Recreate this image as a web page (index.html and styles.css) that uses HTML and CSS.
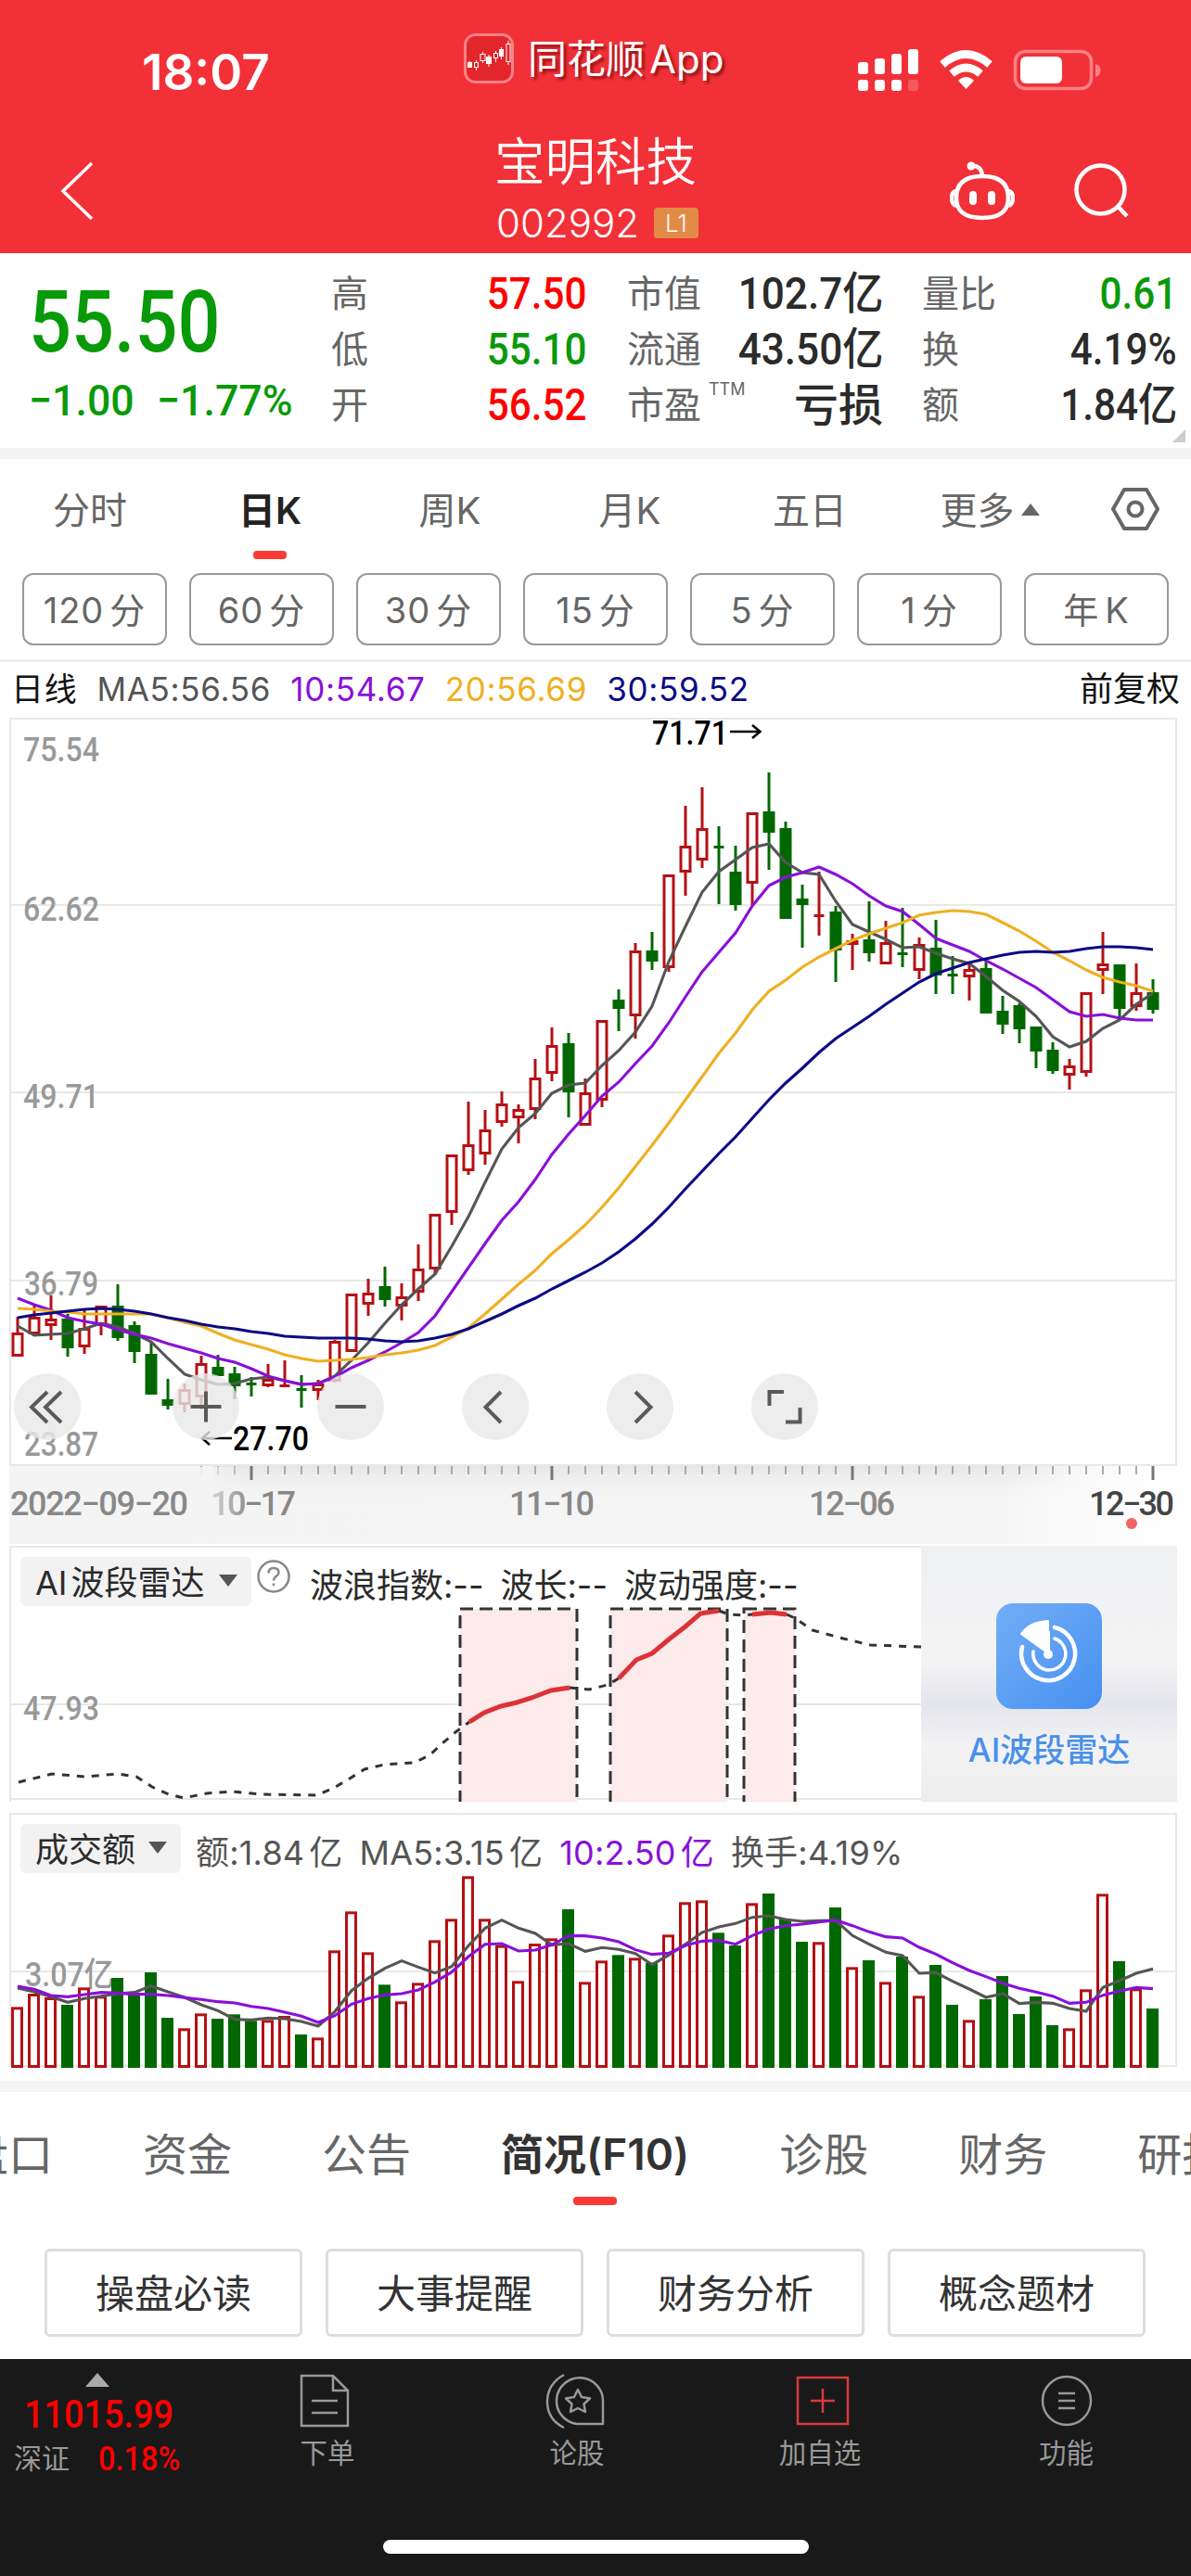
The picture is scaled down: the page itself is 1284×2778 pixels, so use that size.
FILE: index.html
```html
<!DOCTYPE html>
<html lang="zh-CN">
<head>
  <meta charset="UTF-8">
  <meta name="viewport" content="width=device-width, initial-scale=1.0">
  <title>宝明科技 002992</title>
  <link rel="stylesheet" href="styles.css">
</head>
<body>

  <!-- Header -->
  <header class="header">
    <div class="status">
      <div class="time">18:07</div>
      <div class="app">
        <svg width="54" height="54" viewBox="0 0 54 54">
          <rect x="1.5" y="1.5" width="51" height="51" rx="11" fill="#e3262b" stroke="#f98286" stroke-width="3"/>
          <g fill="#fff"><rect x="4" y="31" width="5" height="6"/><rect x="24" y="25" width="6" height="8"/><rect x="38" y="17" width="5" height="8"/></g>
          <g fill="none" stroke="#fff"><path d="M6.500 30V37M13.500 29V40M20.500 20V32M27 23V36M34.500 19V31M40.500 15V28M48 8V34"/><g fill="#e3262b"><rect x="11.500" y="31.500" width="4" height="5"/><rect x="18" y="22.500" width="5" height="7"/><rect x="32.500" y="21.500" width="4" height="5"/><rect x="46" y="11.500" width="4" height="19"/></g></g>
        </svg>
        <span>同花顺<span class="app-latin">App</span></span>
      </div>
      <svg class="signals" width="264" height="46" viewBox="0 0 264 46">
        <g fill="#fff">
          <rect x="0" y="14" width="11" height="13" rx="3"/><rect x="18" y="10" width="11" height="17" rx="3"/>
          <rect x="36" y="5" width="11" height="22" rx="3"/><rect x="54" y="0" width="11" height="27" rx="3"/>
          <rect x="0" y="33" width="11" height="12" rx="3"/><rect x="18" y="33" width="11" height="12" rx="3"/>
          <rect x="36" y="33" width="11" height="12" rx="3"/><rect x="54" y="33" width="11" height="12" rx="3" opacity=".2"/>
          <rect x="175" y="8" width="45" height="29" rx="6"/>
        </g>
        <g fill="none" stroke="#fff" stroke-width="8.500">
          <path d="M91 16.500Q116.500-5.500 142 16.500"/><path d="M101 26.500Q116.500 13.500 132 26.500"/>
        </g>
        <path d="M108 34Q116.500 26 125 34L116.500 43Z" fill="#fff"/>
        <rect x="169.500" y="2.500" width="82" height="40" rx="11" fill="none" stroke="#fb8185" stroke-width="3.500"/>
        <path d="M256 16Q261.500 17.500 261.500 23T256 30Z" fill="#fb8185"/>
      </svg>
    </div>
    <div class="title-bar">
      <svg class="back" width="40" height="64" viewBox="0 0 40 64"><path d="M35 2L4 32L35 62" fill="none" stroke="#fff" stroke-width="3.500"/></svg>
      <div class="title">
        <h1>宝明科技</h1>
        <div class="code">002992 <span class="badge">L1</span></div>
      </div>
      <div class="title-icons">
        <svg width="70" height="64" viewBox="0 0 70 64" fill="none" stroke="#fff" stroke-width="4.500">
          <path d="M24 4.500C31 5 35 8 35 17"/><circle cx="23" cy="5" r="4.500" fill="#fff" stroke="none"/>
          <path d="M35 16C55 16 63 25 63 39C63 54 54 61 35 61S7 54 7 39C7 25 15 16 35 16Z"/>
          <path d="M7 32Q2 33 2 39.500T7 48M63 32Q68 33 68 39.500T63 48"/>
          <path d="M25 36V43M45 36V43" stroke-width="8" stroke-linecap="round"/>
        </svg>
        <svg width="60" height="60" viewBox="0 0 60 60" fill="none" stroke="#fff" stroke-width="4.500"><circle cx="28.500" cy="28.500" r="26"/><path d="M47.500 47L57 57"/></svg>
      </div>
    </div>
  </header>

  <!-- Quote -->
  <section class="quote">
    <div class="price green">
      <div class="last"><span class="num">55.50</span></div>
      <div class="change"><span class="num">−1.00</span><span class="num">−1.77%</span></div>
    </div>
    <dl class="stats stats-a">
      <dt>高</dt><dd class="red"><span class="num">57.50</span></dd>
      <dt>低</dt><dd class="green"><span class="num">55.10</span></dd>
      <dt>开</dt><dd class="red"><span class="num">56.52</span></dd>
    </dl>
    <dl class="stats stats-b">
      <dt>市值</dt><dd><span class="num">102.7亿</span></dd>
      <dt>流通</dt><dd><span class="num">43.50亿</span></dd>
      <dt>市盈<sup>TTM</sup></dt><dd><span>亏损</span></dd>
    </dl>
    <dl class="stats stats-c">
      <dt>量比</dt><dd class="green"><span class="num">0.61</span></dd>
      <dt>换</dt><dd><span class="num">4.19%</span></dd>
      <dt>额</dt><dd><span class="num">1.84亿</span></dd>
    </dl>
    <i class="corner"></i>
  </section>

  <!-- Periods -->
  <nav class="periods">
    <a>分时</a><a class="active">日K</a><a>周K</a><a>月K</a><a>五日</a><a>更多<i class="tri up"></i></a>
    <svg width="52" height="48" viewBox="0 0 52 48" fill="none" stroke="#666" stroke-width="4"><path d="M14 3H38L50 24L38 45H14L2 24Z" stroke-linejoin="round"/><circle cx="26" cy="24" r="7.500"/></svg>
  </nav>
  <div class="intervals">
    <button>120<b>分</b></button><button>60<b>分</b></button><button>30<b>分</b></button><button>15<b>分</b></button><button>5<b>分</b></button><button>1<b>分</b></button><button>年<b>K</b></button>
  </div>

  <!-- K line chart -->
  <div class="legend">
    <span class="black">日线</span><span class="ma5">MA5:56.56</span><span class="ma10">10:54.67</span><span class="ma20">20:56.69</span><span class="ma30">30:59.52</span><span class="adjust">前复权</span>
  </div>
  <div class="kline">
    <svg id="kline" width="1284" height="893" viewBox="0 774 1284 893">
      <defs>
        <linearGradient id="axisBg" x1="0" x2="1" y1="0" y2="0"><stop offset="0" stop-color="#f4f4f4"/><stop offset=".85" stop-color="#f5f5f5"/><stop offset="1" stop-color="#fff"/></linearGradient>
        <linearGradient id="axisShade" x1="0" x2="0" y1="0" y2="1"><stop offset="0" stop-color="#e6e6e6"/><stop offset=".45" stop-color="#f4f4f4" stop-opacity="0"/></linearGradient>
        <linearGradient id="axisFade"><stop offset="0" stop-color="#f4f4f4"/><stop offset="1" stop-color="#f4f4f4" stop-opacity="0"/></linearGradient>
        <linearGradient id="axisEnd"><stop offset="0" stop-color="#fafafa" stop-opacity="0"/><stop offset="1" stop-color="#fafafa"/></linearGradient>
      </defs>
      <path class="grid" d="M11 775H1268V1580H11ZM11 976H1268M11 1178H1268M11 1381H1268"/>
      <rect x="10" y="1581" width="1258" height="84" fill="url(#axisBg)"/>
      <rect x="230" y="1581" width="950" height="84" fill="url(#axisShade)"/>
      <rect x="1080" y="1581" width="100" height="84" fill="url(#axisEnd)"/>
      <g class="axis-label">
        <text x="25" y="821" textLength="82" lengthAdjust="spacingAndGlyphs">75.54</text>
        <text x="25" y="993" textLength="82" lengthAdjust="spacingAndGlyphs">62.62</text>
        <text x="25" y="1195" textLength="82" lengthAdjust="spacingAndGlyphs">49.71</text>
        <text x="26" y="1397" textLength="80" lengthAdjust="spacingAndGlyphs">36.79</text>
        <text x="26" y="1570" textLength="80" lengthAdjust="spacingAndGlyphs">23.87</text>
      </g>
      <g class="dates">
        <text x="11" y="1634" textLength="192">2022−09−20</text>
        <text x="227" y="1634" textLength="92">10−17</text>
        <text x="549" y="1634" textLength="92">11−10</text>
        <text x="872" y="1634" textLength="93">12−06</text>
        <text class="today" x="1174" y="1634" textLength="92">12−30</text>
      </g>
      <g id="ticks"></g>
      <rect x="210" y="1582" width="60" height="60" fill="url(#axisFade)"/>
      <g id="candles"></g>
      <g id="averages"></g>
      <g class="mark">
        <text x="703" y="803" textLength="82" lengthAdjust="spacingAndGlyphs">71.71</text>
        <path d="M787 789H819M811 782L819.500 789L811 796M250 1551H219M226 1544L218 1551L226 1558"/>
        <text x="251" y="1564" textLength="82" lengthAdjust="spacingAndGlyphs">27.70</text>
      </g>
      <circle cx="1220" cy="1643" r="6" fill="#f26364"/>
    </svg>
    <div class="controls">
      <button><svg viewBox="0 0 72 72"><path d="M36 20L19 36.500L36 53M51 20L34 36.500L51 53"/></svg></button>
      <button><svg viewBox="0 0 72 72"><path d="M19.500 36H52.500M36 19.500V52.500"/></svg></button>
      <button><svg viewBox="0 0 72 72"><path d="M19.500 36H52.500"/></svg></button>
      <button><svg viewBox="0 0 72 72"><path d="M42 20L25.500 36.500L42 53"/></svg></button>
      <button><svg viewBox="0 0 72 72"><path d="M31 20L47.500 36.500L31 53"/></svg></button>
      <button><svg viewBox="0 0 72 72"><path d="M19.500 35V20H35M37 52.500H52.500V37"/></svg></button>
    </div>
  </div>

  <!-- AI radar -->
  <section class="radar">
    <div class="panel-head">
      <span class="chip"><span>AI<b>波段雷达</b></span><i class="tri down"></i></span>
      <svg class="help" width="38" height="38" viewBox="0 0 38 38"><circle cx="19" cy="19" r="16.500" fill="none" stroke="#888" stroke-width="2.500"/><path d="M13.500 15.500Q13.500 10 19 10T24.500 15C24.500 19 19 18.500 19 23.500M19 26.500V29" fill="none" stroke="#888" stroke-width="2.500"/></svg>
      <span class="radar-values"><span>波浪指数:--</span><span>波长:--</span><span>波动强度:--</span></span>
    </div>
    <svg class="plot" width="1284" height="276" viewBox="0 1667 1284 276">
      <path class="grid" d="M11 1943V1668H1268M11 1838H993M11 1940H993"/>
      <g class="zone">
        <rect x="496" y="1735" width="126" height="210"/><rect x="658" y="1735" width="126" height="210"/><rect x="802" y="1735" width="55" height="210"/>
      </g>
      <g class="wave">
        <path d="M20 1922L56 1913L92 1916L127 1913L147 1916L164 1927L182 1935L198 1939L223 1934L250 1932L282 1935L342 1936L360 1928L377 1918L393 1908L414 1903L446 1901L463 1893L477 1880L491 1868L506 1857"/>
        <path d="M614 1820L635 1822L655 1817L667 1810M775 1737L786 1741L802 1742L811 1741M848 1741L857 1745L876 1758L909 1767L938 1774L993 1776"/>
        <path class="rise" d="M506 1857L522 1847L540 1840L557 1836L573 1831L594 1823L614 1820M667 1810L686 1790L703 1783L721 1768L739 1754L755 1740L775 1737M811 1741L831 1739L848 1741"/>
      </g>
      <g class="axis-label"><text x="25" y="1855" textLength="82" lengthAdjust="spacingAndGlyphs">47.93</text></g>
    </svg>
    <div class="promo">
      <svg width="114" height="114" viewBox="0 0 114 114">
        <defs><linearGradient id="blue" x1="0" y1="0" x2="1" y2="1"><stop offset="0" stop-color="#73aef7"/><stop offset="1" stop-color="#4690f0"/></linearGradient></defs>
        <rect width="114" height="114" rx="18" fill="url(#blue)"/>
        <g fill="none" stroke="#fff" stroke-width="4.500" stroke-linecap="round"><path d="M63 26A29 29 0 1 1 28 47"/><path d="M63 38A17.500 17.500 0 1 1 40 52" stroke-width="3.500"/></g>
        <path d="M56 54L27 33Q36 20 56 19Z" fill="#fff" stroke="#fff" stroke-width="2" stroke-linejoin="round"/><path d="M56 30V56" stroke="#fff" stroke-width="4"/><circle cx="56" cy="55" r="5" fill="#fff"/>
      </svg>
      <span>AI波段雷达</span>
    </div>
  </section>

  <!-- Turnover -->
  <section class="volume">
    <div class="panel-head">
      <span class="chip">成交额<i class="tri down"></i></span>
      <span class="volume-values"><span>额:1.84<b>亿</b></span><span>MA5:3.15<b>亿</b></span><span class="ma10">10:2.50<b>亿</b></span><span>换手:4.19%</span></span>
    </div>
    <svg class="plot" width="1284" height="289" viewBox="0 1955 1284 289">
      <path class="grid" d="M11 2229V1956H1268V2228H11M11 2126H1268"/>
      <g class="axis-label"><text x="27" y="2142" textLength="96" lengthAdjust="spacingAndGlyphs">3.07亿</text></g>
      <g id="bars"></g>
    </svg>
  </section>

  <!-- Detail tabs -->
  <nav class="tabs">
    <a>盘口</a><a>资金</a><a>公告</a><a class="active">简况(F10)</a><a>诊股</a><a>财务</a><a>研报</a>
  </nav>
  <div class="shortcuts">
    <button>操盘必读</button><button>大事提醒</button><button>财务分析</button><button>概念题材</button>
  </div>

  <!-- Bottom bar -->
  <footer class="footer">
    <div class="index">
      <i class="tri up"></i>
      <div class="index-value"><span class="num">11015.99</span></div>
      <div class="index-row"><span>深证</span><span class="num">0.18%</span></div>
    </div>
    <a class="order"><svg width="60" height="60" viewBox="0 0 60 60"><path d="M5 3H39L55 19V57H5ZM39 3V19H55M16 30H44M16 43H44"/></svg>下单</a>
    <a class="discuss"><svg width="66" height="60" viewBox="0 0 66 60"><path d="M22 2Q4 12 4 31T22 59M64 55H36A25 25 0 1 1 64 31ZM37 18L41 26L50 27.500L43.500 33.500L45 42L37 38L29 42L30.500 33.500L24 27.500L33 26Z" stroke-linejoin="round"/></svg>论股</a>
    <a class="favorite"><svg width="60" height="60" viewBox="0 0 60 60"><path d="M3 5H57V55H3ZM17 30H43M30 17V43"/></svg>加自选</a>
    <a class="more"><svg width="60" height="60" viewBox="0 0 60 60"><circle cx="30" cy="30" r="26"/><path d="M21 22H39M21 30H39M21 38H39"/></svg>功能</a>
    <div class="home"></div>
  </footer>

  <script src="script.js"></script>
</body>
</html>
```

FILE: styles.css
```css
body {
  margin: 0;
  width: 1284px;
  height: 2778px;
  overflow: hidden;
  background: #fff;
  font-family: Inter, "Noto Sans CJK SC", sans-serif;
  color: #666;
}

svg {
  display: block;
  flex: none;
}

button {
  font-family: inherit;
  background: none;
  padding: 0;
}

b {
  font-weight: inherit;
}

/* Narrow digits */
.num {
  display: inline-block;
  font-family: Roboto, "Noto Sans CJK SC", sans-serif;
  font-weight: 500;
  transform: scaleX(0.88);
  transform-origin: right;
}

.red { color: #f00; }
.green { color: #099a09; }
.black { color: #111; }
.ma10 { color: #8a0fd9; }
.ma20 { color: #eeb022; }
.ma30 { color: #0b0b85; }

.tri {
  display: inline-block;
  border: 10px solid transparent;
}
.tri.up {
  border-top: 0;
  border-bottom: 13px solid #666;
}
.tri.down {
  border-bottom: 0;
  border-top: 13px solid #555;
}

/* Header */
.header {
  height: 273px;
  background: #f23037;
  color: #fff;
}

.status {
  display: grid;
  grid-template-columns: 500px 425px 1fr;
  align-items: start;
  height: 140px;
}
.time {
  padding-left: 153px;
  margin-top: 47px;
  font-size: 53px;
  line-height: 62px;
  font-weight: 600;
}
.app {
  display: flex;
  gap: 15px;
  margin-top: 36px;
  font-size: 42px;
  line-height: 56px;
  white-space: nowrap;
  text-shadow: 3px 3px 3px rgba(90, 0, 0, 0.6);
}
.app-latin {
  margin-left: 5px;
}
.signals {
  margin-top: 53px;
}

.title-bar {
  display: grid;
  grid-template-columns: 400px 1fr 400px;
  height: 133px;
}
.back {
  margin: 34px 0 0 64px;
}
.title {
  text-align: center;
}
.title h1 {
  margin: 4px 0 0;
  font-size: 54.5px;
  line-height: 60px;
  font-weight: 350;
}
.code {
  display: flex;
  justify-content: center;
  align-items: center;
  gap: 16px;
  height: 60px;
  margin-top: 6px;
  padding-left: 4px;
  font-size: 42px;
  font-weight: 350;
}
.badge {
  width: 48px;
  height: 33px;
  border-radius: 4px;
  background: #e28b47;
  font-size: 26px;
  line-height: 33px;
}
.title-icons {
  display: flex;
  align-items: center;
  gap: 64px;
  padding: 33px 0 0 140px;
  height: 66px;
}

/* Quote */
.quote {
  position: relative;
  display: grid;
  grid-template-columns: 357px 275px 44px 276px 42px 275px;
  height: 210px;
  border-bottom: 12px solid #f4f4f4;
}
.price {
  padding-left: 31px;
}
.last {
  margin-top: 19px;
  font-size: 92px;
  line-height: 108px;
}
.last .num {
  transform-origin: left;
}
.change {
  display: flex;
  font-size: 47px;
  line-height: 60px;
}
.change .num {
  transform: scaleX(0.95);
  transform-origin: left;
}
.change .num + .num {
  margin-left: 18px;
}
.stats {
  display: grid;
  grid-template-columns: 80px 1fr;
  grid-auto-rows: 60px;
  margin: 14px 0 0;
  line-height: 60px;
  white-space: nowrap;
}
.stats-b { grid-column: 4; }
.stats-c { grid-column: 6; }
.stats-b .num { transform: scaleX(0.92); }
.stats dt {
  font-size: 40px;
}
.stats dd {
  display: flex;
  justify-content: flex-end;
  margin: 0;
  font-size: 48px;
  color: #2b2b2b;
  font-weight: 500;
}
.stats dd.red { color: #f00; }
.stats dd.green { color: #099a09; }
.stats sup {
  margin-left: 8px;
  font-size: 18px;
  line-height: 0;
  vertical-align: 25px;
}
.corner {
  position: absolute;
  right: 6px;
  bottom: 6px;
  border-left: 14px solid transparent;
  border-bottom: 14px solid #ccc;
}

/* Periods */
.periods {
  display: grid;
  grid-template-columns: repeat(6, 194px) 120px;
  justify-items: center;
  align-items: center;
  height: 106px;
  margin-bottom: 17px;
  font-size: 40px;
}
.periods svg {
  margin-top: 2px;
}
.periods a.active {
  font-weight: 600;
  color: #222;
}
.periods a.active::after,
.tabs a.active::after {
  content: "";
  display: block;
  width: 36px;
  height: 9px;
  margin: 17px auto -26px;
  border-radius: 4px;
  background: #fa3a35;
}
.periods .tri {
  margin: 0 0 9px 7px;
}

.intervals {
  display: grid;
  grid-template-columns: repeat(7, 156px);
  gap: 24px;
  height: 78px;
  padding: 0 24px 15px;
  border-bottom: 3px solid #eee;
}
.intervals button {
  padding-bottom: 4px;
  border: 2px solid #999;
  border-radius: 12px;
  color: #666;
  font-size: 38px;
  letter-spacing: 1px;
}
.intervals b {
  margin-left: 6px;
}

/* K line */
.legend {
  display: flex;
  gap: 21px;
  height: 60px;
  padding: 0 12px;
  font-size: 35px;
  line-height: 58px;
  letter-spacing: 0.7px;
  color: #555;
}
.adjust {
  margin-left: auto;
  font-size: 36px;
  letter-spacing: 0;
  color: #111;
}
.kline {
  position: relative;
}
.controls {
  position: absolute;
  left: 15px;
  top: 707px;
  display: flex;
  gap: 84px;
}
.controls button {
  width: 72px;
  height: 72px;
  border: 0;
  border-radius: 50%;
  background: rgba(233, 233, 233, 0.8);
}
.controls button:first-child {
  margin-right: 15px;
}
.controls path {
  fill: none;
  stroke: #5a5a5a;
  stroke-width: 4;
}

.grid {
  fill: none;
  stroke: #e8e8e8;
  stroke-width: 2;
}
.axis-label,
.dates,
.mark {
  font-family: Roboto, "Noto Sans CJK SC", sans-serif;
  font-size: 36px;
  font-weight: 500;
  fill: #999;
}
.dates {
  fill: #888;
}
.dates .today {
  fill: #444;
}
.mark {
  fill: #000;
}
.mark path {
  fill: none;
  stroke: #000;
  stroke-width: 2.5;
}

/* Sub charts */
.radar,
.volume {
  position: relative;
}
.radar {
  height: 276px;
  margin-bottom: 12px;
  overflow: hidden;
}
.volume {
  height: 289px;
  border-bottom: 12px solid #f4f4f4;
}
.panel-head {
  position: absolute;
  z-index: 1;
  top: 12px;
  left: 22px;
  display: flex;
  white-space: nowrap;
}
.chip {
  display: flex;
  align-items: center;
  justify-content: space-between;
  box-sizing: border-box;
  width: 249px;
  height: 53px;
  padding: 0 15px 3px 16px;
  border-radius: 6px;
  background: #f2f2f2;
  color: #2b2b2b;
  font-size: 36px;
}
.chip b {
  margin-left: 4px;
}
.volume .chip {
  width: 173px;
}
.help {
  margin: 2px 0 0 5px;
}
.radar-values,
.volume-values {
  display: flex;
  gap: 18px;
  margin: 5px 0 0 20px;
  font-size: 36px;
  line-height: 52px;
  color: #2b2b2b;
}
.volume-values {
  margin: 5px 0 0 16px;
  letter-spacing: 0.2px;
  color: #555;
}
.volume-values .ma10 {
  color: #8a0fd9;
}
.volume-values b {
  margin-left: 5px;
}
.zone {
  fill: #fdeaea;
  stroke: #333;
  stroke-width: 3;
  stroke-dasharray: 14 7;
}
.wave path {
  fill: none;
  stroke: #333;
  stroke-width: 3;
  stroke-dasharray: 8 8;
}
.wave .rise {
  stroke: #dc3237;
  stroke-width: 5;
  stroke-dasharray: none;
}
.promo {
  position: absolute;
  top: 0;
  right: 15px;
  display: flex;
  flex-direction: column;
  align-items: center;
  width: 276px;
  height: 276px;
  padding-top: 62px;
  box-sizing: border-box;
  background: linear-gradient(#eff0f2, #f4f4f5 45%, #e4e5ec 62%, #f3f3f4 78%, #ededee);
  color: #4a90ea;
  font-size: 35px;
  font-weight: 500;
  line-height: 44px;
}
.promo svg {
  margin-bottom: 22px;
}

/* Detail tabs */
.tabs {
  display: flex;
  gap: 97px;
  height: 128px;
  margin: 0 0 6px -39px;
  width: 1323px;
  overflow: hidden;
  align-items: center;
  font-size: 48px;
  white-space: nowrap;
}
.tabs a {
  flex: none;
}
.tabs a.active {
  color: #333;
  font-size: 46px;
  font-weight: 600;
}
.tabs a.active::after {
  width: 47px;
  margin: 16px auto -25px;
}
.shortcuts {
  display: grid;
  grid-template-columns: repeat(4, 278px);
  gap: 25px;
  height: 95px;
  padding: 35px 48px 24px;
}
.shortcuts button {
  padding-bottom: 4px;
  border: 3px solid #ddd;
  border-radius: 6px;
  color: #333;
  font-size: 42px;
}

/* Bottom bar */
.footer {
  position: relative;
  display: grid;
  grid-template-columns: 218px 270px 268px 256px 275px;
  height: 234px;
  background: #191919;
  color: #999;
}
.footer a {
  display: flex;
  flex-direction: column;
  align-items: center;
  padding-top: 15px;
  font-size: 29.5px;
  line-height: 53px;
}
.footer a svg {
  fill: none;
  stroke: #999;
  stroke-width: 2.5;
}
.footer .order svg,
.footer .discuss svg {
  margin-left: -6px;
}
.footer .favorite svg {
  margin-left: 6px;
  stroke: #d83a3e;
}
.index {
  width: 210px;
  text-align: center;
}
.index .tri {
  display: block;
  width: 0;
  margin: 15px auto 0;
  border-width: 0 13px 15px;
  border-bottom-color: #aaa;
}
.index .num {
  color: #f00;
  transform-origin: left;
}
.index-value {
  margin: 5px 0 0 26px;
  font-size: 43px;
  line-height: 46px;
  text-align: left;
}
.index-row {
  display: flex;
  margin-left: 15px;
  font-size: 30px;
  line-height: 51px;
}
.index-row .num {
  margin-left: 31px;
  font-size: 37px;
}
.home {
  position: absolute;
  left: 413px;
  bottom: 24px;
  width: 459px;
  height: 15px;
  border-radius: 8px;
  background: #fff;
}
```

FILE: script.js
```js
const RED = '#b51014';
const GREEN = '#016801';
const GRAY = '#555';
const PURPLE = '#8a0fd9';

// up/down, high, body top, body bottom, low
const candles = [
  ['r',1420,1437,1463,1463],['r',1408,1420,1439,1441],['r',1397,1422,1430,1445],['g',1417,1422,1454,1463],
  ['r',1413,1432,1453,1460],['r',1408,1408,1430,1440],['g',1385,1408,1443,1446],['g',1425,1429,1458,1470],
  ['g',1448,1460,1504,1504],['g',1487,1509,1516,1520],['r',1492,1498,1515,1523],['r',1462,1470,1507,1520],
  ['g',1461,1474,1484,1484],['g',1474,1481,1495,1509],['g',1485,1491,1494,1506],['r',1471,1487,1495,1496],
  ['r',1467,1493,1496,1496],['g',1483,1497,1500,1518],['r',1488,1492,1500,1510],['r',1445,1446,1490,1491],
  ['r',1395,1395,1458,1458],['r',1379,1394,1407,1419],['g',1366,1387,1402,1409],['r',1384,1398,1409,1424],
  ['r',1342,1368,1394,1403],['r',1309,1309,1369,1375],['r',1245,1245,1308,1321],['r',1188,1234,1263,1267],
  ['r',1197,1218,1245,1256],['r',1177,1190,1211,1215],['r',1191,1196,1206,1233],['r',1142,1162,1197,1207],
  ['r',1108,1127,1158,1166],['g',1114,1125,1178,1205],['r',1163,1178,1214,1214],['r',1100,1100,1187,1194],
  ['g',1067,1078,1088,1112],['r',1017,1025,1096,1120],['g',1005,1025,1037,1046],['r',943,943,1044,1048],
  ['r',869,912,941,966],['r',849,893,928,936],['g',891,912,915,975],['g',912,940,976,982],
  ['r',876,876,953,976],['g',833,875,898,938],['g',886,893,991,991],['g',954,969,976,1022],
  ['r',940,986,989,1009],['g',977,983,1025,1059],['r',1007,1014,1019,1046],['g',972,1013,1028,1037],
  ['r',993,1016,1040,1040],['g',979,1027,1030,1043],['r',1011,1018,1047,1056],['g',992,1022,1052,1072],
  ['g',1031,1050,1053,1072],['r',1040,1045,1054,1079],['g',1037,1044,1093,1093],['g',1074,1090,1105,1115],
  ['g',1082,1084,1110,1125],['g',1107,1107,1134,1152],['g',1124,1132,1155,1158],['r',1142,1149,1160,1175],
  ['r',1070,1070,1157,1161],['r',1005,1039,1047,1072],['g',1040,1040,1088,1097],['r',1039,1070,1086,1090],
  ['g',1056,1070,1089,1093]
];

const ma5 = [1430,1440,1439,1438,1433,1427,1431,1438,1447,1465,1482,1488,1493,1492,1487,1485,1489,1493,1492,1484,1467,1448,1427,1407,1390,1374,1344,1312,1275,1239,1216,1201,1179,1170,1168,1149,1133,1113,1085,1037,999,962,940,927,914,910,930,941,943,972,997,1005,1013,1022,1021,1028,1034,1039,1053,1068,1080,1096,1118,1129,1123,1109,1100,1083,1071];
const ma10 = [1400,1407,1413,1421,1425,1428,1434,1439,1443,1449,1454,1459,1465,1469,1476,1484,1489,1493,1492,1485,1475,1467,1458,1448,1437,1419,1393,1367,1341,1316,1296,1272,1245,1223,1203,1182,1167,1147,1128,1103,1075,1048,1027,1006,977,955,946,941,935,943,953,966,977,983,997,1012,1019,1026,1036,1045,1055,1065,1078,1091,1096,1094,1098,1100,1100];
const ma20 = [1411,1412,1414,1415,1417,1417,1417,1417,1417,1421,1426,1430,1438,1445,1450,1455,1461,1465,1468,1467,1466,1464,1461,1459,1456,1451,1442,1432,1417,1401,1385,1370,1352,1337,1321,1302,1281,1258,1235,1211,1186,1161,1136,1114,1089,1069,1057,1043,1032,1023,1014,1007,1001,995,987,984,982,983,986,995,1004,1015,1027,1036,1046,1054,1059,1063,1069];
const ma30 = [1421,1418,1416,1414,1412,1411,1412,1414,1417,1421,1424,1428,1431,1433,1436,1438,1441,1442,1443,1443,1443,1444,1446,1447,1446,1443,1439,1433,1425,1417,1408,1400,1390,1381,1372,1362,1350,1336,1320,1302,1282,1263,1244,1226,1206,1186,1168,1152,1135,1120,1108,1096,1083,1071,1059,1050,1044,1038,1034,1030,1027,1026,1027,1026,1023,1021,1021,1022,1024];

// distance of each bar top and average from 1950, in thirds of a pixel
const volumes = [643,600,612,636,580,607,549,600,531,678,712,664,681,667,688,685,672,732,742,460,334,466,571,625,565,427,358,220,358,443,559,438,421,327,562,493,475,484,500,409,304,298,403,444,307,276,360,432,433,321,514,492,562,480,607,507,636,685,618,543,666,609,702,712,586,277,495,583,648];
const vol5 = [582,594,610,628,616,608,600,596,575,594,612,636,655,683,685,679,681,690,705,658,590,550,518,494,514,533,512,445,388,362,388,405,442,438,463,451,457,470,506,475,440,402,384,373,353,348,360,366,364,363,412,440,466,477,534,532,560,585,612,600,632,628,631,648,657,580,558,534,520];
const vol10 = [576,586,606,610,603,596,598,602,602,606,613,619,626,630,641,648,660,673,693,671,634,616,604,600,588,562,530,480,440,438,462,459,442,413,413,420,432,458,473,469,444,430,428,440,412,391,380,375,368,362,380,400,416,420,450,472,500,525,545,566,583,595,608,631,628,605,592,580,584];

const xAt = i => 19 + 18 * i;

function line(values, color) {
  const points = values.map((y, i) => xAt(i) + ',' + y).join(' ');
  return `<polyline points="${points}" fill="none" stroke="${color}" stroke-width="3.1"/>`;
}

function body(x, top, bottom, type) {
  if (type === 'g') {
    return `<rect x="${x - 6.5}" y="${top}" width="13" height="${bottom - top}" fill="${GREEN}"/>`;
  }
  return `<rect x="${x - 5}" y="${top + 1.5}" width="10" height="${bottom - top - 3}" fill="#fff" stroke="${RED}" stroke-width="3"/>`;
}

document.getElementById('candles').innerHTML = candles.map(([type, high, top, bottom, low], i) => {
  const x = xAt(i);
  const color = type === 'g' ? GREEN : RED;
  const wick = `<path d="M${x} ${high}V${low}" stroke="${color}" stroke-width="3"/>`;
  if (bottom - top < 4) {
    return wick + `<path d="M${x - 5.5} ${top + 1.5}H${x + 5.5}" stroke="${color}" stroke-width="3"/>`;
  }
  return wick + body(x, top, bottom, type);
}).join('');

document.getElementById('averages').innerHTML =
  line(ma5, GRAY) + line(ma10, PURPLE) + line(ma20, '#eeb022') + line(ma30, '#0b0b85');

let ticks = '';
for (let i = 11; i < 69; i++) {
  const major = i % 18 === 14;
  ticks += `<path d="M${xAt(i)} 1581V${major ? 1596 : 1590}" stroke="${major ? '#777' : '#aaa'}" stroke-width="${major ? 3 : 2}"/>`;
}
document.getElementById('ticks').innerHTML = ticks;

const toY = v => 1950 + v / 3;
document.getElementById('bars').innerHTML =
  volumes.map((v, i) => body(xAt(i) - 0.5, toY(v), 2230, candles[i][0])).join('') +
  line(vol5.map(toY), GRAY) + line(vol10.map(toY), PURPLE);
```
